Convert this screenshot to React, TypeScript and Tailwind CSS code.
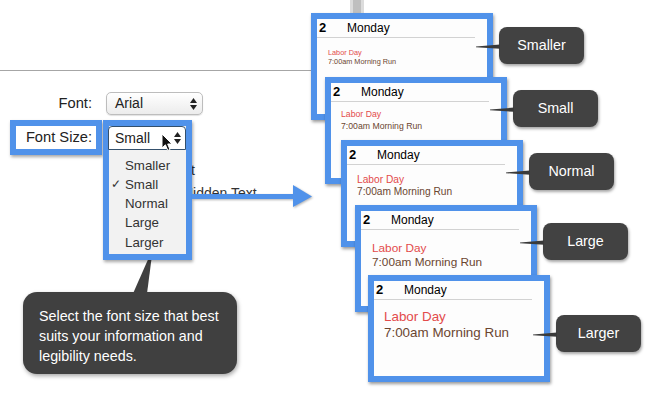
import React from "react";

type CardSpec = {
  label: string;
  row: string;
  events: string;
  callout: string;
};

const cards: CardSpec[] = [
  { label: "Smaller", row: "ml-0", events: "pl-[11px] pt-[10px] text-[7.3px] leading-[9px]", callout: "mt-[14px]" },
  { label: "Small", row: "ml-[14px] -mt-[43px]", events: "pl-[10px] pt-[7px] text-[8.7px] leading-[11.7px]", callout: "mt-[13px]" },
  { label: "Normal", row: "ml-[30px] -mt-[44px]", events: "pl-[10px] pt-[8.5px] text-[10.2px] leading-[12.7px]", callout: "mt-[13px]" },
  { label: "Large", row: "ml-[44px] -mt-[42px]", events: "pl-[11px] pt-[10.5px] text-[11.8px] leading-[14px]", callout: "mt-[18px]" },
  { label: "Larger", row: "ml-[57px] -mt-[37px]", events: "pl-[10px] pt-[8.5px] text-[13.4px] leading-[16.6px]", callout: "mt-[40px]" },
];

function UpDown({ className }: { className?: string }) {
  return (
    <svg width="7" height="12" viewBox="0 0 7 12" className={className}>
      <path d="M0 5 L3.5 0 L7 5 Z" fill="#222" />
      <path d="M0 7 L3.5 12 L7 7 Z" fill="#222" />
    </svg>
  );
}

function Cursor() {
  return (
    <svg width="12" height="19" viewBox="0 0 12 19" className="absolute left-[52px] top-[6px]">
      <path
        d="M1 1 L1 15 L4.4 11.8 L6.8 17.5 L9 16.5 L6.7 11 L11 11 Z"
        fill="#111"
        stroke="#fff"
        strokeWidth="1"
        strokeLinejoin="round"
      />
    </svg>
  );
}

function DayCard({ card }: { card: CardSpec }) {
  return (
    <div className={`relative flex items-start ${card.row}`}>
      {/* Day preview */}
      <div className="w-[182px] h-[107px] border-[6px] border-[#5092ea] bg-[#fdfdfd] shadow-[1px_2px_3px_rgba(0,0,0,0.4)] shrink-0">
        <div className="h-[19px] mr-[12px] border-b border-[#d2d2d2] flex items-center pl-[2px] leading-[18px]">
          <span className="w-[28px] text-[13px] font-bold text-black">2</span>
          <span className="text-[12px] text-black">Monday</span>
        </div>
        <div className={card.events}>
          <div className="text-[#e34b4b]">Labor Day</div>
          <div className="text-[#6b4630]">7:00am Morning Run</div>
        </div>
      </div>

      {/* Callout */}
      <div
        className={`relative ml-[6px] w-[85px] h-[37px] rounded-[8px] bg-[#424242] shadow-[1px_2px_3px_rgba(0,0,0,0.35)] flex items-center justify-center text-white text-[14.3px] shrink-0 ${card.callout}`}
      >
        <svg width="24" height="6" viewBox="0 0 24 6" className="absolute -left-[23px] top-[17px]">
          <polygon points="0,2.4 24,0.6 24,4.8 0,3.2" fill="#3a3a3a" />
        </svg>
        {card.label}
      </div>
    </div>
  );
}

export default function App() {
  const sizes = ["Smaller", "Small", "Normal", "Large", "Larger"];

  return (
    <div className="relative w-[650px] h-[395px] overflow-hidden bg-white font-['Liberation_Sans',Arial,sans-serif] text-[#222]">
      <div className="flex">
        {/* Left: preferences pane */}
        <div className="w-[311px] shrink-0 flex flex-col">
          <div className="h-[71px] border-b border-[#a6a6a6]" />

          {/* Font */}
          <div className="mt-[21px] flex items-center h-[23px]">
            <div className="w-[92px] text-right text-[14.7px]">Font:</div>
            <div className="ml-[14px] w-[97px] h-[23px] rounded-[5px] border border-[#bdbdbd] bg-gradient-to-b from-white to-[#ececec] shadow-[0_1px_1px_rgba(0,0,0,0.12)] flex items-center justify-between pl-[8px] pr-[5px] text-[14px]">
              <span>Arial</span>
              <UpDown />
            </div>
          </div>

          {/* Font Size */}
          <div className="mt-[5px] flex h-[35px]">
            <div className="ml-[10px] w-[92px] h-[35px] border-[6px] border-[#5092ea] bg-white shadow-[1px_2px_3px_rgba(0,0,0,0.35)] flex items-center justify-end pr-[4px] text-[14.7px] whitespace-nowrap">
              Font Size:
            </div>
            <div className="relative ml-[1px] w-[89px]">
              <div className="absolute left-0 top-0 z-10 w-[89px] h-[140px] border-[6px] border-[#5092ea] bg-[#f2f2f2] shadow-[1px_2px_3px_rgba(0,0,0,0.35)] flex flex-col">
                <div className="relative -ml-[1px] h-[24px] rounded-t-[4px] border border-[#34506c] bg-white flex items-center justify-between pl-[6px] pr-[4px] text-[14px]">
                  <span>Small</span>
                  <UpDown />
                  <Cursor />
                </div>
                <div className="pt-[5.5px] text-[13.3px] text-[#333] leading-[19.25px]">
                  {sizes.map((s) => (
                    <div key={s} className="flex">
                      <span className="w-[16px] pl-[2px] text-[12px]">{s === "Small" ? "✓" : ""}</span>
                      <span>{s}</span>
                    </div>
                  ))}
                </div>
              </div>
            </div>
          </div>

          {/* Options partly hidden under the open menu */}
          <div className="mt-[4px] text-[14px] text-[#333] leading-[23px] whitespace-nowrap">
            <div className="pl-[128px]">Show Alert</div>
            <div className="pl-[144px]">Show Hidden Text</div>
          </div>

          {/* Help bubble */}
          <div className="relative mt-[87px] ml-[23px] w-[214px] h-[82px] rounded-[14px] bg-[#404040] shadow-[1px_2px_4px_rgba(0,0,0,0.35)] pt-[14px] pl-[16px] text-white text-[14.3px] leading-[20px]">
            <svg width="24" height="40" viewBox="0 0 24 40" className="absolute left-[108px] -top-[38px]">
              <polygon points="2,39.5 19,1 21,1 16,39.5" fill="#404040" />
            </svg>
            Select the font size that best
            <br />
            suits your information and
            <br />
            legibility needs.
          </div>
        </div>

        {/* Right: previews */}
        <div className="flex flex-col">
          <div className="ml-[39px] w-[14px] h-[13px] border-x-[3px] border-[#dcdcdc] bg-[#bfbfbf]" />
          {cards.map((c) => (
            <DayCard key={c.label} card={c} />
          ))}
        </div>
      </div>

      {/* Pointer arrow from the menu to the previews */}
      <svg width="125" height="28" viewBox="0 0 125 28" className="absolute left-[190px] top-[183px] z-20 drop-shadow-[1px_1px_1px_rgba(0,0,0,0.3)]">
        <rect x="2" y="11" width="104" height="5" fill="#5092ea" />
        <polygon points="103,2 122,13.5 103,24" fill="#5092ea" />
      </svg>
    </div>
  );
}
